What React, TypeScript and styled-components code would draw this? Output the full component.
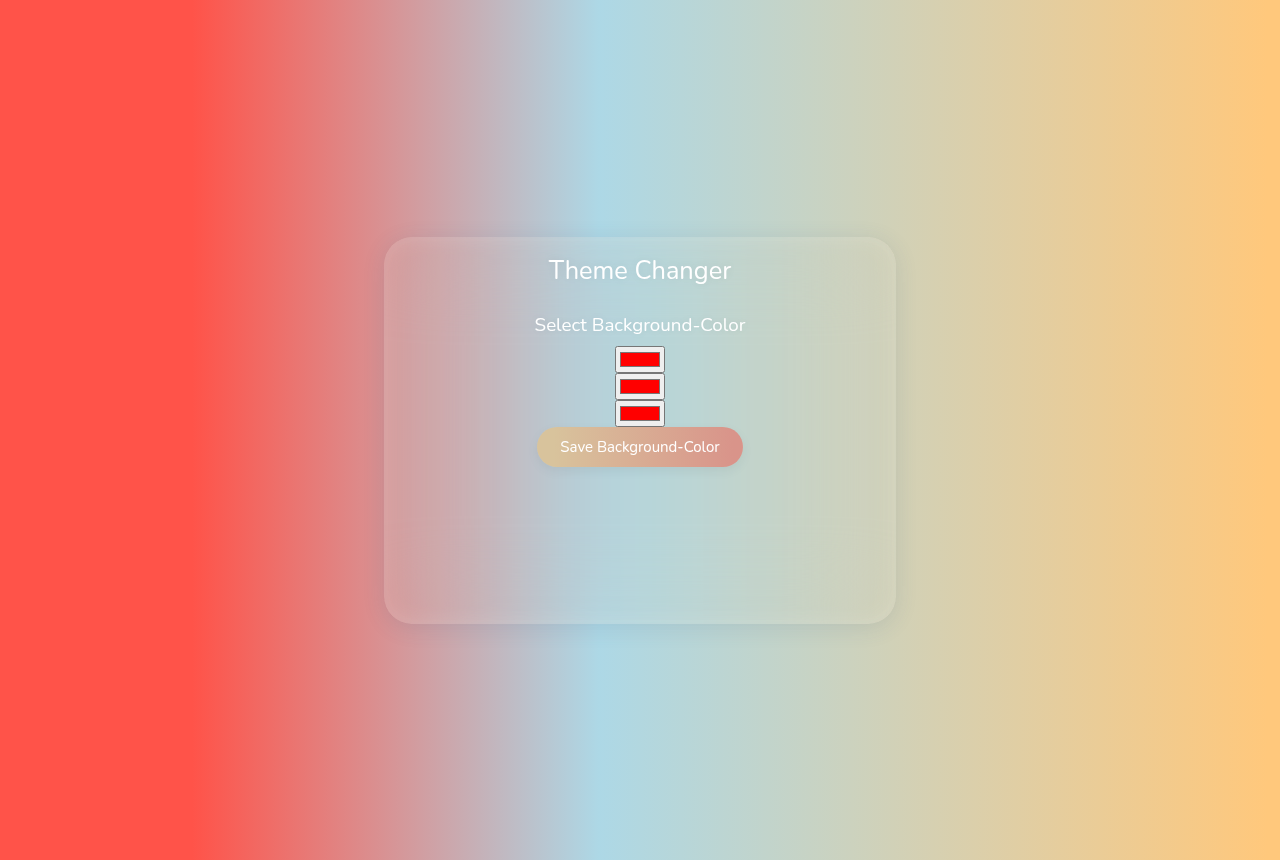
import { useState } from "react";
import styled, { createGlobalStyle } from "styled-components";

const GlobalStyle = createGlobalStyle`
  * { box-sizing: border-box; }
  html, body {
    margin: 0;
    padding: 0;
    height: 100%;
  }
  body {
    font-family: "Nunito", "Lato", "Open Sans", sans-serif;
  }
  #root { height: 100%; }
`;

export default function App() {
  const [colors, setColors] = useState(["#ff0000", "#ff0000", "#ff0000"]);

  const update = (i: number, v: string) =>
    setColors((prev) => prev.map((c, idx) => (idx === i ? v : c)));

  return (
    <>
      <GlobalStyle />
      <Page>
        <Card>
          <Title>Theme Changer</Title>
          <Label>Select Background-Color</Label>
          <Pickers>
            {colors.map((c, i) => (
              <ColorInput
                key={i}
                type="color"
                value={c}
                onChange={(e) => update(i, e.target.value)}
              />
            ))}
          </Pickers>
          <SaveButton type="button">Save Background-Color</SaveButton>
        </Card>
      </Page>
    </>
  );
}

const Page = styled.main`
  min-height: 860px;
  width: 100%;
  display: flex;
  align-items: center;
  justify-content: center;
  background: linear-gradient(
    to right,
    #ff5349 15%,
    #add8e6 46.8%,
    #ffc87c 99%
  );
`;

const Card = styled.section`
  width: 512px;
  height: 387px;
  margin-top: 1px;
  display: flex;
  flex-direction: column;
  align-items: center;
  padding-top: 17px;
  border-radius: 28px;
  background: rgba(235, 210, 180, 0.08);
  box-shadow: 0 4px 22px rgba(70, 90, 120, 0.14),
    inset 0 0 22px rgba(255, 255, 255, 0.14);
  backdrop-filter: blur(45px);
  -webkit-backdrop-filter: blur(45px);
  color: #fff;
`;

const Title = styled.h2`
  margin: 0;
  font-size: 25.4px;
  font-weight: 400;
  line-height: 34px;
  text-shadow: 0 0 8px rgba(0, 0, 0, 0.08);
`;

const Label = styled.h3`
  margin: 25px 0 9px;
  font-size: 18.8px;
  font-weight: 400;
  line-height: 24px;
  text-shadow: 0 0 8px rgba(0, 0, 0, 0.08);
`;

const Pickers = styled.div`
  display: flex;
  flex-direction: column;
  align-items: center;
`;

const ColorInput = styled.input`
  display: block;
  width: 50px;
  height: 27px;
  margin: 0;
  cursor: pointer;
`;

const SaveButton = styled.button`
  width: 206px;
  height: 40px;
  border: none;
  border-radius: 20px;
  background: linear-gradient(to right, #d8c39c 8%, #d9948a 95%);
  color: #fff;
  font-family: inherit;
  font-size: 15px;
  box-shadow: 0 4px 12px rgba(0, 0, 0, 0.06);
  cursor: pointer;
`;
